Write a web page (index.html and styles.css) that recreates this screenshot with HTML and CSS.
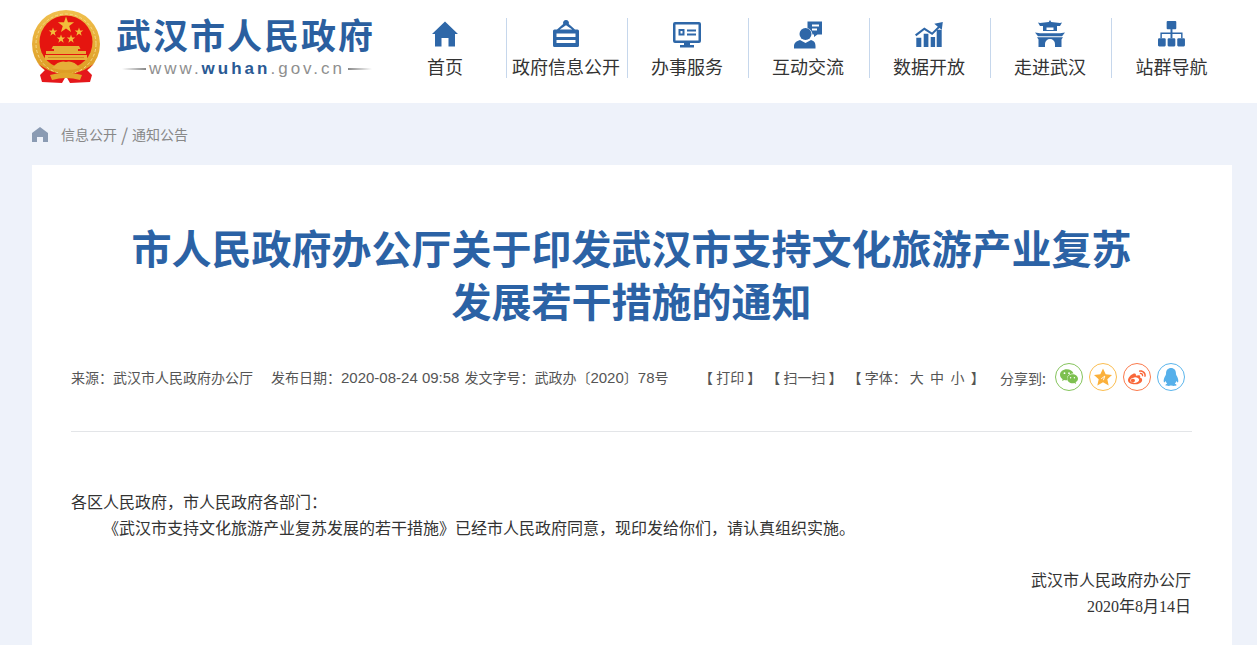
FILE: index.html
```html
<!DOCTYPE html>
<html lang="zh-CN">
<head>
  <meta charset="UTF-8">
  <title>市人民政府办公厅关于印发武汉市支持文化旅游产业复苏发展若干措施的通知</title>
  <link rel="stylesheet" href="styles.css">
</head>
<body>
  <svg class="sprites" width="0" height="0">
    <defs>
      <polygon id="star" points="0,-10 2.35,-3.1 9.5,-3.1 3.8,1.2 5.9,8.1 0,4 -5.9,8.1 -3.8,1.2 -9.5,-3.1 -2.35,-3.1"/>
      <linearGradient id="gold" x1="0" y1="0" x2="0" y2="1">
        <stop offset="0" stop-color="#f0c04e"/>
        <stop offset="1" stop-color="#dc9a20"/>
      </linearGradient>
    </defs>
  </svg>

  <header class="header">
    <a class="logo">
      <svg class="emblem" viewBox="0 0 68 73">
        <circle cx="34" cy="34" r="34" fill="url(#gold)"/>
        <circle cx="34" cy="34" r="30" fill="none" stroke="#f7d987" stroke-width="1" stroke-dasharray="3 2"/>
        <circle cx="34" cy="32" r="26.500" fill="#e5150f"/>
        <path d="M6 54 L13 60 L8 65 L10 72 L30 73 L34 66 L38 73 L58 72 L60 65 L55 60 L62 54 L52 60 Q34 68 16 60Z" fill="#e5171b"/>
        <use href="#star" transform="translate(34 15) scale(.85)" fill="#f2bd3a"/>
        <use href="#star" transform="translate(21 22) scale(.45)" fill="#f2bd3a"/>
        <use href="#star" transform="translate(47 22) scale(.45)" fill="#f2bd3a"/>
        <use href="#star" transform="translate(29 29) scale(.45)" fill="#f2bd3a"/>
        <use href="#star" transform="translate(39 29) scale(.45)" fill="#f2bd3a"/>
        <path d="M21 36h26l1.500 3H46v2h8v3H14v-3h8v-2h-2.500z" fill="#e6ae38"/>
        <path d="M13 45h42v5H13z" fill="#e9b23a"/>
        <path d="M16 47.500h36" stroke="#c98a1c" stroke-width=".8"/>
        <path d="M20 58 Q27 50 34 52 Q41 50 48 58 Q34 62 20 58Z" fill="#e6ae38"/>
        <path d="M18 65 Q34 60 50 65 L48 70 Q34 66 20 70Z" fill="#e3a52a"/>
      </svg>
      <div class="logo-text">
        <div class="logo-name">武汉市人民政府</div>
        <div class="logo-url">
          <i class="fade-l"></i>
          <span>www.<b>wuhan</b>.gov.cn</span>
          <i class="fade-r"></i>
        </div>
      </div>
    </a>

    <nav class="nav">
      <a class="nav-item">
        <svg class="nav-icon" viewBox="0 0 26 26"><path d="M13 0.500 L26 13 L23 13 L23 25.500 L16.500 25.500 L16.500 17 L9.500 17 L9.500 25.500 L3 25.500 L3 13 L0 13Z"/></svg>
        <span>首页</span>
      </a>
      <a class="nav-item">
        <svg class="nav-icon icon-tall" viewBox="0 0 26 27"><path fill-rule="evenodd" d="M13 0a3 3 0 0 1 2.800 4L22 9.500h2.500a1.500 1.500 0 0 1 1.500 1.500V25.500a1.500 1.500 0 0 1-1.500 1.500H1.500A1.500 1.500 0 0 1 0 25.500V11A1.500 1.500 0 0 1 1.500 9.500H4l6.200-5.500A3 3 0 0 1 13 0ZM13 5.200 L6.800 9.500h12.400ZM3.500 13.500v3.500h19v-3.500ZM3.500 20v3h19v-3Z"/></svg>
        <span>政府信息公开</span>
      </a>
      <a class="nav-item">
        <svg class="nav-icon icon-low" viewBox="0 0 28 26"><path fill-rule="evenodd" d="M2 0h24a2 2 0 0 1 2 2v17a2 2 0 0 1-2 2H17v2h4v2.500H7V23h4v-2H2a2 2 0 0 1-2-2V2a2 2 0 0 1 2-2ZM2.500 2.500v16h23v-16ZM5.500 7h6v6.500h-6ZM7.500 9v2.500h2V9ZM14 7.500h9v2h-9ZM14 11.500h9v2h-9Z"/></svg>
        <span>办事服务</span>
      </a>
      <a class="nav-item">
        <svg class="nav-icon icon-person" viewBox="0 0 28 28"><path fill-rule="evenodd" d="M13.500 0.500H28v13h-4.500l-3.500 2.500V13.500h-1.500a8 8 0 0 0-5-6.500ZM18 3.500v2h7v-2ZM18 7.500v2h5v-2Z"/><circle cx="11.500" cy="13" r="6"/><path d="M0 27.500v-2.500c0-3 2.500-5 6-6l5.500 3 5.500-3c3.500 1 4.500 3 4.500 6v2.500Z"/></svg>
        <span>互动交流</span>
      </a>
      <a class="nav-item">
        <svg class="nav-icon icon-chart" viewBox="0 0 28 25"><path d="M0 12.500 L9.300 5.500 L17 10.500 L22.800 4.800 L19.300 1.700 L27.800 0 L26.800 7.800 L24.400 6 L17.200 13 L9.300 8 L1.300 14.300Z"/><path d="M1.300 15.700h5V25h-5ZM8.700 11.700h4.700V25H8.700ZM15.700 15h4.400V25h-4.400ZM21.700 7.700h5V25h-5Z"/></svg>
        <span>数据开放</span>
      </a>
      <a class="nav-item">
        <svg class="nav-icon icon-tall" viewBox="0 0 30 27"><path fill-rule="evenodd" d="M15 0l1.200 2L25 3l2-.5L25 6h-3v5H8V6H5L3 2.500 5 3l8.800-1ZM11.500 7.500v2.500h7V7.500Z"/><path d="M0 12.500l5 .8h20l5-.8-3 3.700H3Z"/><path d="M2 17.200h26l-1.500 2.300V27H20v-3a5 5 0 0 0-10 0v3H3.500v-7.500Z"/></svg>
        <span>走进武汉</span>
      </a>
      <a class="nav-item">
        <svg class="nav-icon" viewBox="0 0 28 27"><path d="M10 0h8a1 1 0 0 1 1 1v6.500a1 1 0 0 1-1 1h-3V12h10.500v6H24v-4.500H15V18h-2v-4.500H4V18H2.500v-6H13V8.500h-3a1 1 0 0 1-1-1V1a1 1 0 0 1 1-1Z"/><rect x="0" y="18" width="8" height="8.500" rx="1.200"/><rect x="10" y="18" width="8" height="8.500" rx="1.200"/><rect x="20" y="18" width="8" height="8.500" rx="1.200"/></svg>
        <span>站群导航</span>
      </a>
    </nav>
  </header>

  <div class="crumbs">
    <svg class="crumbs-home" viewBox="0 0 16 15"><path d="M8 0 L16 6 V15 H11 V10 H5 V15 H0 V6Z"/></svg>
    <a>信息公开</a><span class="crumbs-sep">/</span><a>通知公告</a>
  </div>

  <main class="article">
    <h1 class="article-title">市人民政府办公厅关于印发武汉市支持文化旅游产业复苏<br>发展若干措施的通知</h1>

    <div class="meta">
      <div class="meta-info">
        <span class="meta-source">来源：武汉市人民政府办公厅</span>
        <span>发布日期：<span class="meta-num">2020-08-24 09:58</span></span>
        <span>发文字号：武政办〔<span class="meta-num">2020</span>〕<span class="meta-num">78</span>号</span>
      </div>
      <div class="meta-tools">
        <span class="tool">【 打印 】</span>
        <span class="tool">【 扫一扫 】</span>
        <span class="tool">【 字体： 大 &nbsp;中 &nbsp;小 &nbsp;】</span>
      </div>
      <div class="share">
        <span class="share-label">分享到:</span>
        <a class="share-btn wechat">
          <svg viewBox="0 0 20 18"><path d="M7.500 0.500C3.400 0.500 0 3.200 0 6.600c0 2 1.100 3.700 2.900 4.800L2.200 13.500l2.500-1.300c.8.200 1.700.4 2.700.4l.7 0c-.2-.6-.3-1.100-.3-1.700 0-3.200 3-5.700 6.800-5.700h.4C14.200 2.400 11.200.500 7.500.500Z"/><path d="M20 10.900c0-2.800-2.800-5-6-5s-6 2.200-6 5 2.800 5 6 5c.7 0 1.300-.1 1.900-.3l2 1.100-.5-1.800c1.600-1 2.600-2.400 2.600-4Z"/><g fill="#fff"><circle cx="5" cy="4.800" r="1"/><circle cx="10" cy="4.800" r="1"/><circle cx="11.800" cy="9.800" r=".8"/><circle cx="16" cy="9.800" r=".8"/></g></svg>
        </a>
        <a class="share-btn star">
          <svg viewBox="0 0 20 20"><polygon points="10,0.500 13,7 20,7.700 14.800,12.400 16.300,19.500 10,15.800 3.700,19.500 5.200,12.400 0,7.700 7,7"/><path d="M8 12l4-3-1.500 4.500" fill="none" stroke="#fff" stroke-width="1"/></svg>
        </a>
        <a class="share-btn weibo">
          <svg viewBox="0 0 22 18"><path fill-rule="evenodd" d="M15 10c1.500.5 2.500 1.300 2.300 2.900C17 16 12.500 18 8.500 18 4 18 0 16 0 13c0-3 3-6.500 6-7.800 2-.8 3.500-.3 3.700 1 .1.500 0 1 0 1.300 1.500-.5 4-1 5 0 .5.700.4 1.500 0 2.500ZM7.800 9.500c-3 .3-5.300 2-5.100 3.900.2 1.900 2.800 3.100 5.800 2.800s5.300-2 5.100-3.900c-.2-1.900-2.800-3.100-5.800-2.800ZM6 11a2.500 2.300 0 1 0 .01 0Z"/><path d="M13.500 1c5-1.500 9.500 3 8 7.800h-1.800c1.300-3.800-2.200-7.400-6.200-6ZM14.500 4c2.700-.7 4.700 1.500 4 4.200h-1.500c.4-1.700-.8-3-2.500-2.700Z"/></svg>
        </a>
        <a class="share-btn qq">
          <svg viewBox="0 0 18 20"><path d="M9 0C5.500 0 3.500 2.500 3.500 6c0 1-.2 1.500-.6 2.300C1.500 10.500.5 13 1 15.500c.3 1 1.200.3 2-1 .3 1.300 1 2.300 1.800 3-1.300.5-2 1-2 1.500 0 .7 2 1 3.700 1 1.200 0 2.200-.2 2.500-.7h0c.3.500 1.300.7 2.500.7 1.700 0 3.700-.3 3.700-1 0-.5-.7-1-2-1.500.8-.7 1.500-1.700 1.800-3 .8 1.300 1.700 2 2 1 .5-2.500-.5-5-1.900-7.200-.4-.8-.6-1.300-.6-2.300C14.500 2.500 12.500 0 9 0Z"/></svg>
        </a>
      </div>
    </div>

    <div class="article-body">
      <p>各区人民政府，市人民政府各部门：</p>
      <p class="indent">《武汉市支持文化旅游产业复苏发展的若干措施》已经市人民政府同意，现印发给你们，请认真组织实施。</p>
      <p class="sign first">武汉市人民政府办公厅</p>
      <p class="sign"><span class="sign-num">2020</span>年<span class="sign-num">8</span>月<span class="sign-num">14</span>日</p>
    </div>
  </main>
</body>
</html>
```

FILE: styles.css
```css
html, body {
  margin: 0;
  padding: 0;
}
body {
  width: 1257px;
  height: 645px;
  overflow: hidden;
  background: #eef2fa;
  color: #333;
  font-family: "Noto Sans CJK SC", "Liberation Sans", sans-serif;
}
.sprites {
  position: absolute;
}

/* header */
.header {
  display: flex;
  justify-content: space-between;
  height: 103px;
  padding: 0 24px 0 32px;
  background: #fff;
}
.logo {
  display: flex;
  padding-top: 10px;
}
.emblem {
  width: 68px;
  height: 73px;
}
.logo-text {
  width: 256px;
  margin-left: 16px;
}
.logo-name {
  margin-top: 1px;
  font-size: 35px;
  font-weight: 700;
  line-height: 46px;
  letter-spacing: 2px;
  white-space: nowrap;
  color: #2b5f9f;
}
.logo-url {
  display: flex;
  align-items: center;
  justify-content: space-between;
  margin: 3px 0 0 6px;
  font-family: "Liberation Sans", sans-serif;
  font-size: 17px;
  line-height: 18px;
  letter-spacing: 3px;
  white-space: nowrap;
  color: #8f8f8f;
}
.logo-url b {
  font-weight: 700;
  color: #2a5a94;
}
.logo-url i {
  width: 24px;
  height: 2px;
}
.fade-l {
  background: linear-gradient(to right, #fff, #888);
}
.fade-r {
  background: linear-gradient(to right, #888, #fff);
}

.nav {
  display: flex;
  margin-top: 18px;
  height: 60px;
}
.nav-item {
  display: flex;
  flex-direction: column;
  align-items: center;
  box-sizing: border-box;
  width: 121px;
  padding-right: 2px;
  border-right: 1px solid #c6d7ec;
  font-size: 18px;
  color: #333;
}
.nav-item:last-child {
  border-right: 0;
}
.nav-icon {
  height: 26px;
  margin-top: 3px;
  fill: #2e67a8;
}
.icon-tall {
  height: 27px;
  margin: 2px 0 0;
}
.icon-low {
  margin: 4px 0 -1px;
}
.icon-person {
  height: 28px;
  margin: 3px 0 -2px;
}
.icon-chart {
  height: 25px;
  margin: 4px 0 0;
}
.nav-item span {
  margin-top: 7px;
  line-height: 24px;
  white-space: nowrap;
}

/* breadcrumb */
.crumbs {
  display: flex;
  align-items: center;
  height: 62px;
  padding-left: 32px;
  font-size: 14px;
  color: #888;
}
.crumbs-home {
  width: 16px;
  height: 15px;
  margin-right: 13px;
  fill: #8a9bb3;
}
.crumbs-sep {
  margin: 0 4px;
  font-size: 18px;
  line-height: 18px;
}

/* article */
.article {
  box-sizing: border-box;
  width: 1200px;
  height: 480px;
  margin-left: 32px;
  padding: 56px 40px 0 39px;
  background: #fff;
}
.article-title {
  margin: 0;
  font-size: 40px;
  font-weight: 700;
  line-height: 53px;
  text-align: center;
  white-space: nowrap;
  color: #2b62a5;
}
.meta {
  display: flex;
  align-items: center;
  height: 28px;
  margin-top: 36px;
  font-size: 14px;
  color: #555;
}
.meta-info {
  display: flex;
  width: 628px;
}
.meta-source {
  margin-right: 18px;
}
.meta-info span + span {
  margin-right: 5px;
}
.meta-num {
  font-family: "Liberation Sans", sans-serif;
  font-size: 15px;
  margin: 0 !important;
}
.meta-tools {
  display: flex;
  gap: 5px;
  width: 301px;
  white-space: pre;
}
.share {
  display: flex;
  align-items: center;
}
.share-label {
  margin: 2px 9px 0 0;
}
.share-btn {
  display: flex;
  align-items: center;
  justify-content: center;
  box-sizing: border-box;
  width: 28px;
  height: 28px;
  margin-right: 6px;
  border: 1px solid;
  border-radius: 50%;
}
.share-btn svg {
  width: 18px;
  height: 18px;
}
.wechat {
  border-color: #85c45c;
  fill: #7dc04f;
}
.star {
  border-color: #fbbd4f;
  fill: #fbb03b;
}
.weibo {
  border-color: #fb7a4c;
  fill: #f9673a;
}
.qq {
  border-color: #5ab5ec;
  fill: #56b0ea;
}

.article-body {
  margin-top: 40px;
  padding-top: 56px;
  border-top: 1px solid #e3e5e8;
  font-size: 16px;
  line-height: 26px;
  color: #333;
}
.article-body p {
  margin: 0;
}
.indent {
  text-indent: 32px;
}
.sign {
  padding-right: 1px;
  text-align: right;
}
.sign-num {
  font-family: "Liberation Serif", serif;
}
.first {
  margin-top: 26px !important;
}
```
